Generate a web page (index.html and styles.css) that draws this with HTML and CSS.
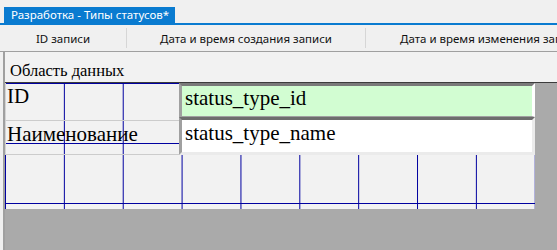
FILE: index.html
```html
<!DOCTYPE html>
<html lang="ru">
<head>
    <meta charset="UTF-8">
    <title>Разработка - Типы статусов</title>
    <link rel="stylesheet" href="styles.css">
</head>
<body>
    <div class="tabs">
        <div class="tab">Разработка - Типы статусов*</div>
    </div>
    <div class="columns">
        <div class="col col-id">ID записи</div>
        <span class="sep"></span>
        <div class="col">Дата и время создания записи</div>
        <span class="sep"></span>
        <div class="col col-last">Дата и время изменения записи</div>
    </div>
    <div class="designer">
        <div class="band">Область данных</div>
        <div class="canvas">
            <div class="form">
                <div class="labels">
                    <div class="label label-id">ID</div>
                    <div class="label label-name">Наименование</div>
                </div>
                <div class="fields">
                    <div class="field field-id">status_type_id</div>
                    <div class="field field-name">status_type_name</div>
                </div>
            </div>
        </div>
    </div>
</body>
</html>
```

FILE: styles.css
```css
body {
    margin: 0;
    width: 557px;
    height: 250px;
    overflow: hidden;
    background-color: #f0f0f0;
    font-family: 'Noto Sans', sans-serif;
    display: flex;
    flex-direction: column;
}

/* tab strip */
.tabs {
    height: 23px;
    padding-left: 4px;
    display: flex;
    align-items: flex-end;
    border-bottom: 2px solid #0a7bd0;
    flex-shrink: 0;
}

.tab {
    width: 164px;
    height: 16px;
    padding-left: 7px;
    background-color: #0a7bd0;
    color: white;
    font-size: 11.5px;
    line-height: 16px;
    white-space: nowrap;
}

/* column header row */
.columns {
    height: 26px;
    display: flex;
    align-items: center;
    border-bottom: 1px solid #a0a0a0;
    flex-shrink: 0;
    font-size: 11.5px;
    color: #111;
    white-space: nowrap;
    overflow: hidden;
}

.col {
    width: 238px;
    flex-shrink: 0;
    text-align: center;
    padding-top: 1px;
}

.col-id {
    width: 126px;
}

.col-last {
    width: 190px;
    overflow: hidden;
    text-align: left;
    padding-left: 34px;
}

.sep {
    width: 1px;
    height: 20px;
    background-color: #d6d6d6;
    flex-shrink: 0;
}

/* design surface */
.designer {
    flex: 1;
    margin-left: 3px;
    border-left: 2px solid #a0a0a0;
    display: flex;
    flex-direction: column;
    font-family: 'Liberation Serif', serif;
}

.band {
    height: 31px;
    padding-left: 5px;
    padding-top: 4px;
    box-sizing: border-box;
    background-color: #f2f2f2;
    border-bottom: 1px solid #3c3c3c;
    font-size: 16.5px;
    line-height: 30px;
}

.canvas {
    flex: 1;
    background-color: #aaaaaa;
}

.form {
    width: 530px;
    height: 126px;
    display: flex;
    background-color: #f2f2f2;
    background-image:
        linear-gradient(to right, transparent calc(100% - 1px), #0000a0 calc(100% - 1px)),
        linear-gradient(to bottom, transparent calc(100% - 1px), #0000a0 calc(100% - 1px));
    background-size: 58.86px 100%, 100% 60px;
    background-position: 1px 0, 0 1px;
}

.labels {
    width: 174px;
    flex-shrink: 0;
}

.label {
    box-sizing: border-box;
    padding-left: 1px;
    border-left: 1px solid #d4d4d4;
    border-bottom: 1px solid #cccccc;
    font-size: 21px;
    line-height: 24px;
    white-space: nowrap;
}

.label-id {
    height: 38px;
    padding-top: 1px;
}

.label-name {
    height: 34px;
    padding-top: 1px;
}

.fields {
    width: 356px;
    flex-shrink: 0;
}

.field {
    box-sizing: border-box;
    padding-left: 3px;
    border-top: 3px solid #7a7a7a;
    border-left: 3px solid #a0a0a0;
    font-size: 21px;
    line-height: 24px;
    white-space: nowrap;
}

.field-id {
    height: 34px;
    padding-top: 0;
    background-color: #d2fdd2;
    border-right: 3px solid #ffffff;
    border-bottom: 1px solid #a0a0a0;
}

.field-name {
    height: 38px;
    padding-top: 1px;
    background-color: #ffffff;
    border-top-color: #6d6d6d;
    border-right: 3px solid #ebebeb;
    border-bottom: 3px solid #ebebeb;
}
```
